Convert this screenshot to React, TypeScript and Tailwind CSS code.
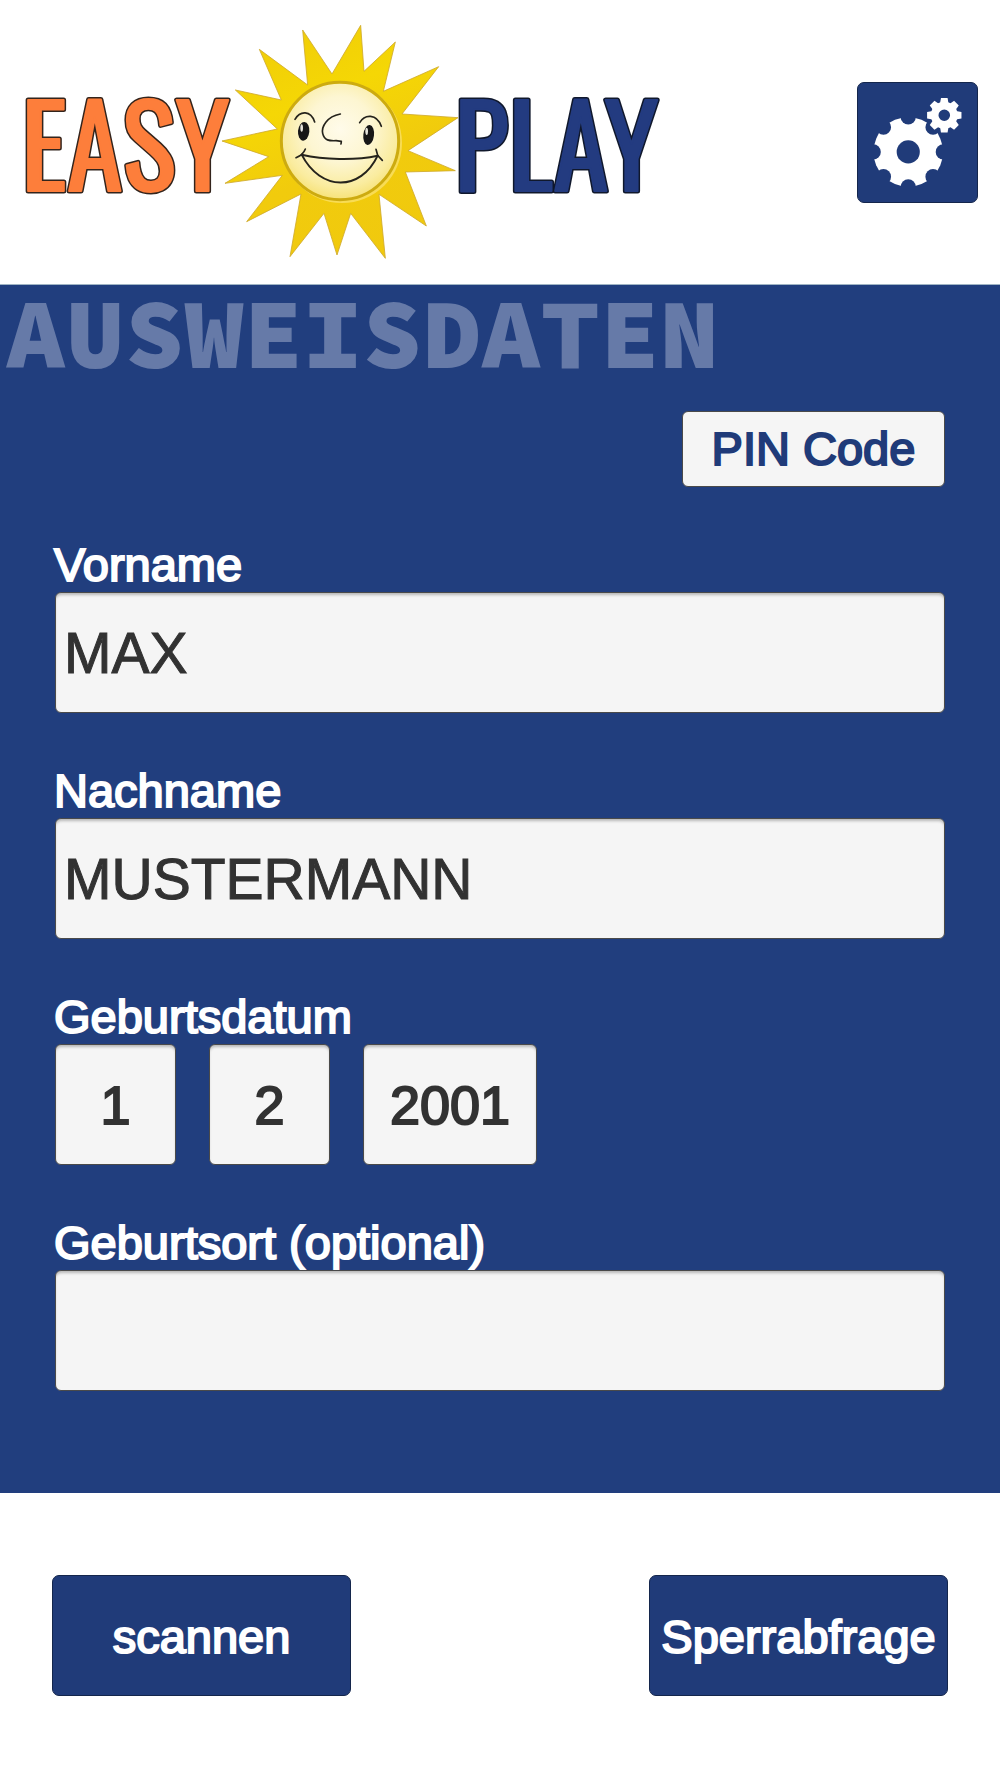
import type { ComponentProps, ReactNode } from "react";

const labelText =
  "text-[47px] leading-[50px] [-webkit-text-stroke:2px_currentColor] [paint-order:stroke_fill]";
const fieldBox =
  "block h-[121px] rounded-[6px] border border-[#4a4a4a] bg-[#f5f5f5] text-[#323232] shadow-[inset_0_3px_3px_-1px_rgba(0,0,0,0.25)] outline-none";
const actionButton =
  "flex h-[121px] w-[299px] items-center justify-center rounded-[7px] border border-[#14264c] bg-[#203b79] pt-0.5 text-white";

function Logo() {
  return (
    <svg viewBox="0 0 680 284" className="h-auto w-[680px] min-w-0 shrink" role="img" aria-label="Easy Play">
      <defs>
        <linearGradient id="rays" x1="0.3" y1="0" x2="0.7" y2="1">
          <stop offset="0" stopColor="#f0cd08" />
          <stop offset="0.3" stopColor="#f5d705" />
          <stop offset="0.6" stopColor="#f1cb0d" />
          <stop offset="1" stopColor="#f0c90e" />
        </linearGradient>
        <radialGradient id="face" cx="0.5" cy="0.4" r="0.62">
          <stop offset="0" stopColor="#fffbea" />
          <stop offset="0.45" stopColor="#fdf6d2" />
          <stop offset="0.8" stopColor="#faec9f" />
          <stop offset="1" stopColor="#f6e070" />
        </radialGradient>
      </defs>
      <g className="font-['Oswald','Open_Sans_Condensed',sans-serif] text-[113px] font-normal" strokeLinejoin="round">
        <text x="21" y="191" fill="#fd7e3b" stroke="#33241c" strokeWidth="5" paintOrder="stroke">EASY</text>
        <text x="21" y="191" fill="#fd7e3b" stroke="#fd7e3b" strokeWidth="2" aria-hidden="true">EASY</text>
        <text x="454" y="191" fill="#233b80" stroke="#10182c" strokeWidth="5" paintOrder="stroke">PLAY</text>
        <text x="454" y="191" fill="#233b80" stroke="#233b80" strokeWidth="2" aria-hidden="true">PLAY</text>
      </g>
      <g transform="translate(210 10) scale(0.33333)">
        <path
          d="M278 60 366 192 452 46 462 184 556 96 520 244 686 170 576 312 744 323 594 422 736 482 586 486 649 648 507 553 526 745 422 610 381 735 342 610 240 740 273 552 110 635 217 496 45 520 176 440 36 393 202 357 76 240 214 270 148 118 293 225Z"
          fill="url(#rays)"
          stroke="#cfa92c"
          strokeWidth="2.5"
        />
        <circle cx="396" cy="399" r="180" fill="#f8dc55" />
        <circle cx="390" cy="393" r="176" fill="url(#face)" stroke="#cdab10" strokeWidth="9" />
        <g fill="none" stroke="#25231c" strokeWidth="5" strokeLinecap="round" strokeLinejoin="round">
          <path d="M255 328C270 302 302 300 314 336" />
          <path d="M449 338C464 312 500 310 514 349" />
          <path d="M391 312C350 320 334 350 338 370C343 392 358 393 378 392L394 394L393 402" />
          <path d="M258 443C272 438 282 428 286 417M258 443L275 434" />
          <path d="M498 418L503 436L517 451" />
          <path d="M275 434C340 449 435 452 503 437" strokeWidth="6" />
          <path d="M275 434C332 545 452 545 503 437" strokeWidth="6" />
        </g>
        <g fill="#171717">
          <ellipse cx="281" cy="364" rx="17" ry="28" transform="rotate(5 281 364)" />
          <ellipse cx="476" cy="375" rx="16" ry="30" transform="rotate(7 476 375)" />
        </g>
        <ellipse cx="275" cy="354" rx="4" ry="11" fill="#e6e4dc" />
        <ellipse cx="470" cy="364" rx="4" ry="11" fill="#e6e4dc" />
      </g>
    </svg>
  );
}

const eighths = [0, 45, 90, 135, 180, 225, 270, 315];

function GearsIcon() {
  return (
    <svg viewBox="0 0 360 360" className="size-[120px]" aria-hidden="true">
      <mask id="bigGear">
        <circle cx="152" cy="210" r="105" fill="white" />
        {eighths.map((a) => (
          <circle key={a} cx="152" cy="104" r="23" fill="black" transform={`rotate(${a} 152 210)`} />
        ))}
        <circle cx="152" cy="210" r="35" fill="black" />
        <circle cx="261" cy="99" r="56" fill="black" />
      </mask>
      <rect width="360" height="360" fill="white" mask="url(#bigGear)" />
      <g fill="white">
        {eighths.map((a) => (
          <path key={a} d="M248 64 251 47H271L274 64Z" transform={`rotate(${a} 261 99)`} />
        ))}
      </g>
      <circle cx="261" cy="99" r="29" fill="none" stroke="white" strokeWidth="23" />
    </svg>
  );
}

function Field({ id, label, children }: { id: string; label: string; children: ReactNode }) {
  return (
    <div>
      <label htmlFor={id} className={`-ml-px block pb-0.5 text-white ${labelText}`}>
        {label}
      </label>
      {children}
    </div>
  );
}

function TextField(props: ComponentProps<"input">) {
  return (
    <input
      type="text"
      {...props}
      className={`w-full px-2 text-[57px] [-webkit-text-stroke:1px_currentColor] ${fieldBox}`}
    />
  );
}

function DateField({ wide, ...props }: ComponentProps<"input"> & { wide?: boolean }) {
  return (
    <input
      type="text"
      inputMode="numeric"
      {...props}
      className={`${wide ? "w-[174px]" : "w-[121px]"} text-center text-[54px] [-webkit-text-stroke:2px_currentColor] ${fieldBox}`}
    />
  );
}

export default function App() {
  return (
    <div className="flex min-h-screen flex-col bg-white font-['Liberation_Sans',Arial,sans-serif]">
      <header className="flex items-center justify-between pr-[22px]">
        <Logo />
        <button
          type="button"
          aria-label="Einstellungen"
          className="flex size-[121px] shrink-0 items-center justify-center rounded-[7px] border border-[#14264c] bg-[#203b79]"
        >
          <GearsIcon />
        </button>
      </header>

      <main className="border-t border-[#9fb4c4] bg-[#213e7e] pb-[102px]">
        <h1 className="pl-1.5 font-['Source_Code_Pro','Fira_Mono','Roboto_Mono','DejaVu_Sans_Mono',monospace] text-[99px] leading-[96px] font-black text-[#667aa8]">
          AUSWEISDATEN
        </h1>
        <form className="px-[55px] pt-[30px]">
          <div className="flex justify-end">
            <button
              type="button"
              className={`h-[76px] w-[263px] rounded-[6px] border border-[#4a4a4a] bg-[#f5f5f5] text-[#203b79] ${labelText}`}
            >
              PIN Code
            </button>
          </div>
          <div className="mt-[53px] flex flex-col gap-[53px]">
            <Field id="vorname" label="Vorname">
              <TextField id="vorname" defaultValue="MAX" />
            </Field>
            <Field id="nachname" label="Nachname">
              <TextField id="nachname" defaultValue="MUSTERMANN" />
            </Field>
            <Field id="tag" label="Geburtsdatum">
              <div className="flex gap-[33px]">
                <DateField id="tag" defaultValue="1" />
                <DateField aria-label="Monat" defaultValue="2" />
                <DateField aria-label="Jahr" defaultValue="2001" wide />
              </div>
            </Field>
            <Field id="geburtsort" label="Geburtsort (optional)">
              <TextField id="geburtsort" />
            </Field>
          </div>
        </form>
      </main>

      <footer className="flex flex-wrap justify-between gap-6 px-[52px] py-[82px]">
        <button type="button" className={`${actionButton} ${labelText}`}>
          scannen
        </button>
        <button type="button" className={`${actionButton} ${labelText}`}>
          Sperrabfrage
        </button>
      </footer>
    </div>
  );
}
